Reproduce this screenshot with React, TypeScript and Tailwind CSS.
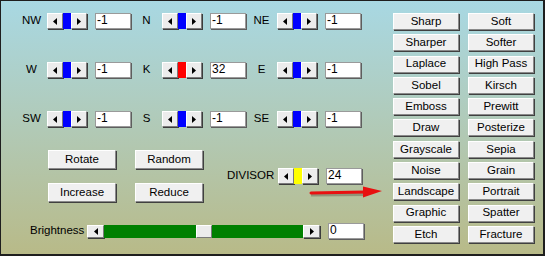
import React from 'react'

// ─── Peças estilo Win32 ───────────────────────────────────────────────────────
function ArrowBtn({ dir, w = 16, h = 16 }: { dir: 'l' | 'r'; w?: number; h?: number }) {
  return (
    <div
      className="flex items-center justify-center bg-[#ececec] border border-t-white border-l-white border-r-[#7a7a7a] border-b-[#7a7a7a] shadow-[1px_1px_0_#3c3c3c] box-border shrink-0"
      style={{ width: w, height: h }}
    >
      <svg width="4" height="7" viewBox="0 0 4 7">
        {dir === 'l' ? <path d="M4 0 L0 3.5 L4 7 Z" fill="#000" /> : <path d="M0 0 L4 3.5 L0 7 Z" fill="#000" />}
      </svg>
    </div>
  )
}

function MiniScroll({ color }: { color: string }) {
  return (
    <div className="flex h-4 w-10 shrink-0">
      <ArrowBtn dir="l" />
      <div className="w-2 h-4" style={{ backgroundColor: color }} />
      <ArrowBtn dir="r" />
    </div>
  )
}

function Field({ value }: { value: string }) {
  return (
    <div className="w-9 h-4 bg-white border border-[#9a9a9a] shadow-[1px_1px_0_#5e5e5e] box-border pl-[1px] text-[12px] leading-[13px] text-black shrink-0">
      {value}
    </div>
  )
}

function Btn({ label, w, h = 'h-[17px]' }: { label: string; w: string; h?: string }) {
  return (
    <button
      className={`${w} ${h} bg-[#f0f0f0] border border-t-white border-l-white border-r-[#8a8a8a] border-b-[#8a8a8a] shadow-[1px_1px_0_#404040] text-[11.5px] leading-none text-black flex items-center justify-center`}
    >
      {label}
    </button>
  )
}

const rows = [
  [['NW', '-1', '#0000ff'], ['N', '-1', '#0000ff'], ['NE', '-1', '#0000ff']],
  [['W', '-1', '#0000ff'], ['K', '32', '#ff0000'], ['E', '-1', '#0000ff']],
  [['SW', '-1', '#0000ff'], ['S', '-1', '#0000ff'], ['SE', '-1', '#0000ff']],
]

const filtros = [
  ['Sharp', 'Soft'], ['Sharper', 'Softer'], ['Laplace', 'High Pass'], ['Sobel', 'Kirsch'],
  ['Emboss', 'Prewitt'], ['Draw', 'Posterize'], ['Grayscale', 'Sepia'], ['Noise', 'Grain'],
  ['Landscape', 'Portrait'], ['Graphic', 'Spatter'], ['Etch', 'Fracture'],
]

export default function App() {
  return (
    <div
      className="relative w-[545px] h-[256px] overflow-hidden flex border-t border-l border-r-2 border-b-2 border-[#1e1e1e] bg-gradient-to-b from-[#a8d8e3] to-[#b8ba88] text-black"
      style={{ fontFamily: '"Liberation Sans", Arial, sans-serif' }}
    >
      {/* Coluna esquerda */}
      <div className="w-[391px] flex flex-col pl-[15px] pt-3">
        <div className="flex flex-col gap-[33px]">
          {rows.map((row, i) => (
            <div key={i} className="flex h-4">
              {row.map(([lbl, val, color]) => (
                <div key={lbl} className="w-[115px] flex items-center">
                  <span className="w-8 text-center text-[11.5px] leading-none">{lbl}</span>
                  <MiniScroll color={color} />
                  <div className="ml-2"><Field value={val} /></div>
                </div>
              ))}
            </div>
          ))}
        </div>

        {/* Botões + divisor */}
        <div className="flex items-center mt-[23px] pl-8">
          <div className="flex flex-col gap-[14px]">
            <div className="flex gap-[19px]">
              <Btn label="Rotate" w="w-[68px]" h="h-[19px]" />
              <Btn label="Random" w="w-[68px]" h="h-[19px]" />
            </div>
            <div className="flex gap-[19px]">
              <Btn label="Increase" w="w-[68px]" h="h-[19px]" />
              <Btn label="Reduce" w="w-[68px]" h="h-[19px]" />
            </div>
          </div>
          <span className="ml-6 w-[42px] text-[11.5px] leading-none">DIVISOR</span>
          <div className="ml-[9px]"><MiniScroll color="#ffff00" /></div>
          <div className="ml-2"><Field value="24" /></div>
        </div>

        {/* Brilho */}
        <div className="flex items-center mt-[21px] pl-[14px]">
          <span className="text-[11.5px] leading-none w-[57px]">Brightness</span>
          <div className="flex h-[13px] w-[233px]">
            <ArrowBtn dir="l" w={17} h={13} />
            <div className="flex-1 bg-[#008000]" />
            <div className="w-4 h-[13px] bg-[#ececec] border border-t-white border-l-white border-r-[#7a7a7a] border-b-[#7a7a7a] box-border" />
            <div className="flex-1 bg-[#008000]" />
            <ArrowBtn dir="r" w={17} h={13} />
          </div>
          <div className="ml-2"><Field value="0" /></div>
        </div>
      </div>

      {/* Coluna de filtros */}
      <div className="flex flex-col gap-[4.3px] pt-3 pl-[1px]">
        {filtros.map(([a, b]) => (
          <div key={a} className="flex gap-[9px]">
            <Btn label={a} w="w-[66px]" />
            <Btn label={b} w="w-[66px]" />
          </div>
        ))}
      </div>

      {/* Seta vermelha (anotação) */}
      <svg className="absolute left-[306px] top-[183px]" width="78" height="18" viewBox="0 0 78 18">
        <path d="M4 10.5 L60 10" stroke="#3a2a20" strokeOpacity="0.3" strokeWidth="4" />
        <path d="M4 9 L58 8" stroke="#e81010" strokeWidth="3" strokeLinecap="round" />
        <path d="M56 2.5 L75 7 L56 13.5 Z" fill="#e81010" />
      </svg>
    </div>
  )
}
